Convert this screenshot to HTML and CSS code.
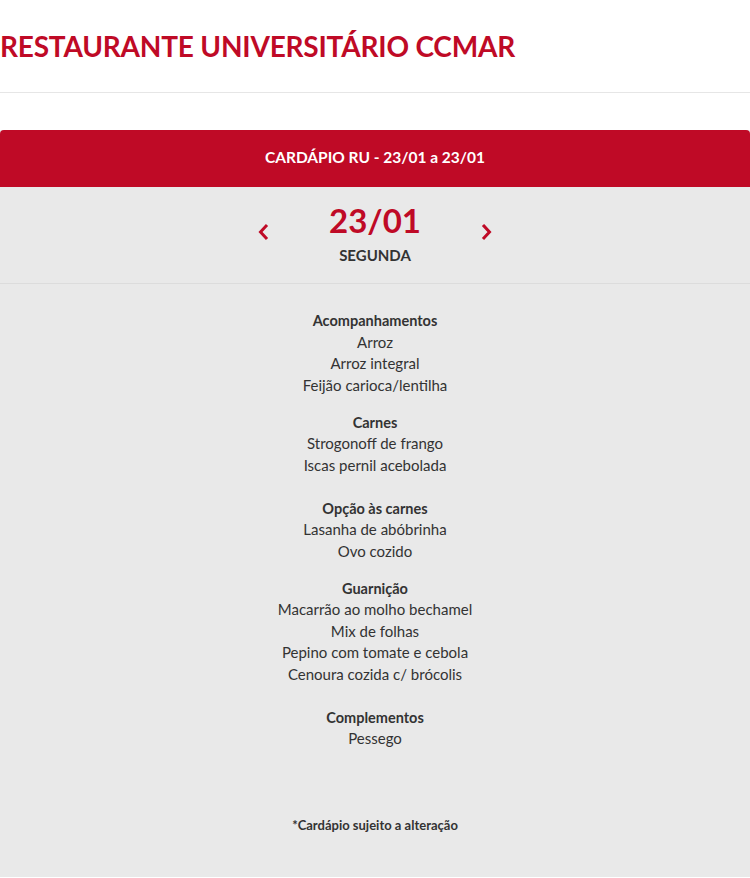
FILE: index.html
```html
<!DOCTYPE html>
<html lang="pt-BR">
<head>
<meta charset="utf-8">
<title>Restaurante Universitário CCMAR</title>
<link rel="stylesheet" href="styles.css">
</head>
<body>
<header class="site-header">
  <h1 class="site-title">RESTAURANTE UNIVERSITÁRIO CCMAR</h1>
</header>
<section class="card">
  <div class="card-head">CARDÁPIO RU - 23/01 a 23/01</div>
  <div class="day-nav">
    <button class="nav-btn" aria-label="Anterior">
      <svg width="12" height="18" viewBox="0 0 12 18"><path d="M9 3 L3.5 9 L9 15" fill="none" stroke="#bf0a26" stroke-width="3" stroke-linecap="square"/></svg>
    </button>
    <div class="day">
      <div class="day-date">23/01</div>
      <div class="day-name">SEGUNDA</div>
    </div>
    <button class="nav-btn" aria-label="Próximo">
      <svg width="12" height="18" viewBox="0 0 12 18"><path d="M3 3 L8.5 9 L3 15" fill="none" stroke="#bf0a26" stroke-width="3" stroke-linecap="square"/></svg>
    </button>
  </div>
  <div class="menu">
    <div class="group">
      <div class="group-title">Acompanhamentos</div>
      <div>Arroz</div>
      <div>Arroz integral</div>
      <div>Feijão carioca/lentilha</div>
    </div>
    <div class="group group-extra">
      <div class="group-title">Carnes</div>
      <div>Strogonoff de frango</div>
      <div>Iscas pernil acebolada</div>
    </div>
    <div class="group">
      <div class="group-title">Opção às carnes</div>
      <div>Lasanha de abóbrinha</div>
      <div>Ovo cozido</div>
    </div>
    <div class="group group-extra">
      <div class="group-title">Guarnição</div>
      <div>Macarrão ao molho bechamel</div>
      <div>Mix de folhas</div>
      <div>Pepino com tomate e cebola</div>
      <div>Cenoura cozida c/ brócolis</div>
    </div>
    <div class="group">
      <div class="group-title">Complementos</div>
      <div>Pessego</div>
    </div>
    <p class="note">*Cardápio sujeito a alteração</p>
  </div>
</section>
</body>
</html>
```
FILE: styles.css
```css
html, body {
  margin: 0;
  padding: 0;
  background: #ffffff;
  font-family: Lato, "Open Sans", "Liberation Sans", sans-serif;
  color: #333333;
}
.site-header {
  height: 92px;
  border-bottom: 1px solid #e6e6e6;
  display: flex;
  align-items: center;
}
.site-title {
  margin: 0;
  font-size: 28px;
  font-weight: 700;
  color: #bf0a26;
  letter-spacing: -0.2px;
  line-height: 1;
}
.card {
  margin-top: 37px;
  background: #e9e9e9;
}
.card-head {
  background: #bf0a26;
  color: #ffffff;
  height: 57px;
  box-sizing: border-box;
  padding-bottom: 4px;
  border-radius: 4px 4px 0 0;
  display: flex;
  align-items: center;
  justify-content: center;
  font-size: 15.5px;
  font-weight: 700;
}
.day-nav {
  height: 96px;
  border-bottom: 1px solid #dcdcdc;
  display: flex;
  align-items: center;
  justify-content: center;
  gap: 42px;
}
.nav-btn {
  background: none;
  border: 0;
  padding: 0;
  width: 20px;
  height: 20px;
  display: flex;
  align-items: center;
  justify-content: center;
  margin-top: -6px;
}
.day {
  display: flex;
  flex-direction: column;
  align-items: center;
  width: 120px;
}
.day-date {
  color: #bf0a26;
  font-size: 33px;
  font-weight: 700;
  line-height: 38px;
  margin-top: -5px;
}
.day-name {
  font-size: 15px;
  font-weight: 700;
  line-height: 20px;
  margin-top: 6px;
}
.menu {
  text-align: center;
  font-size: 15px;
  line-height: 21.5px;
  padding: 26px 0 41px;
}
.group {
  margin-bottom: 15.5px;
}
.group-extra {
  margin-bottom: 21.5px;
}
.group-title {
  font-weight: 700;
  font-size: 14.5px;
}
.note {
  margin: 65px 0 0;
  font-size: 13px;
  font-weight: 700;
}
```
